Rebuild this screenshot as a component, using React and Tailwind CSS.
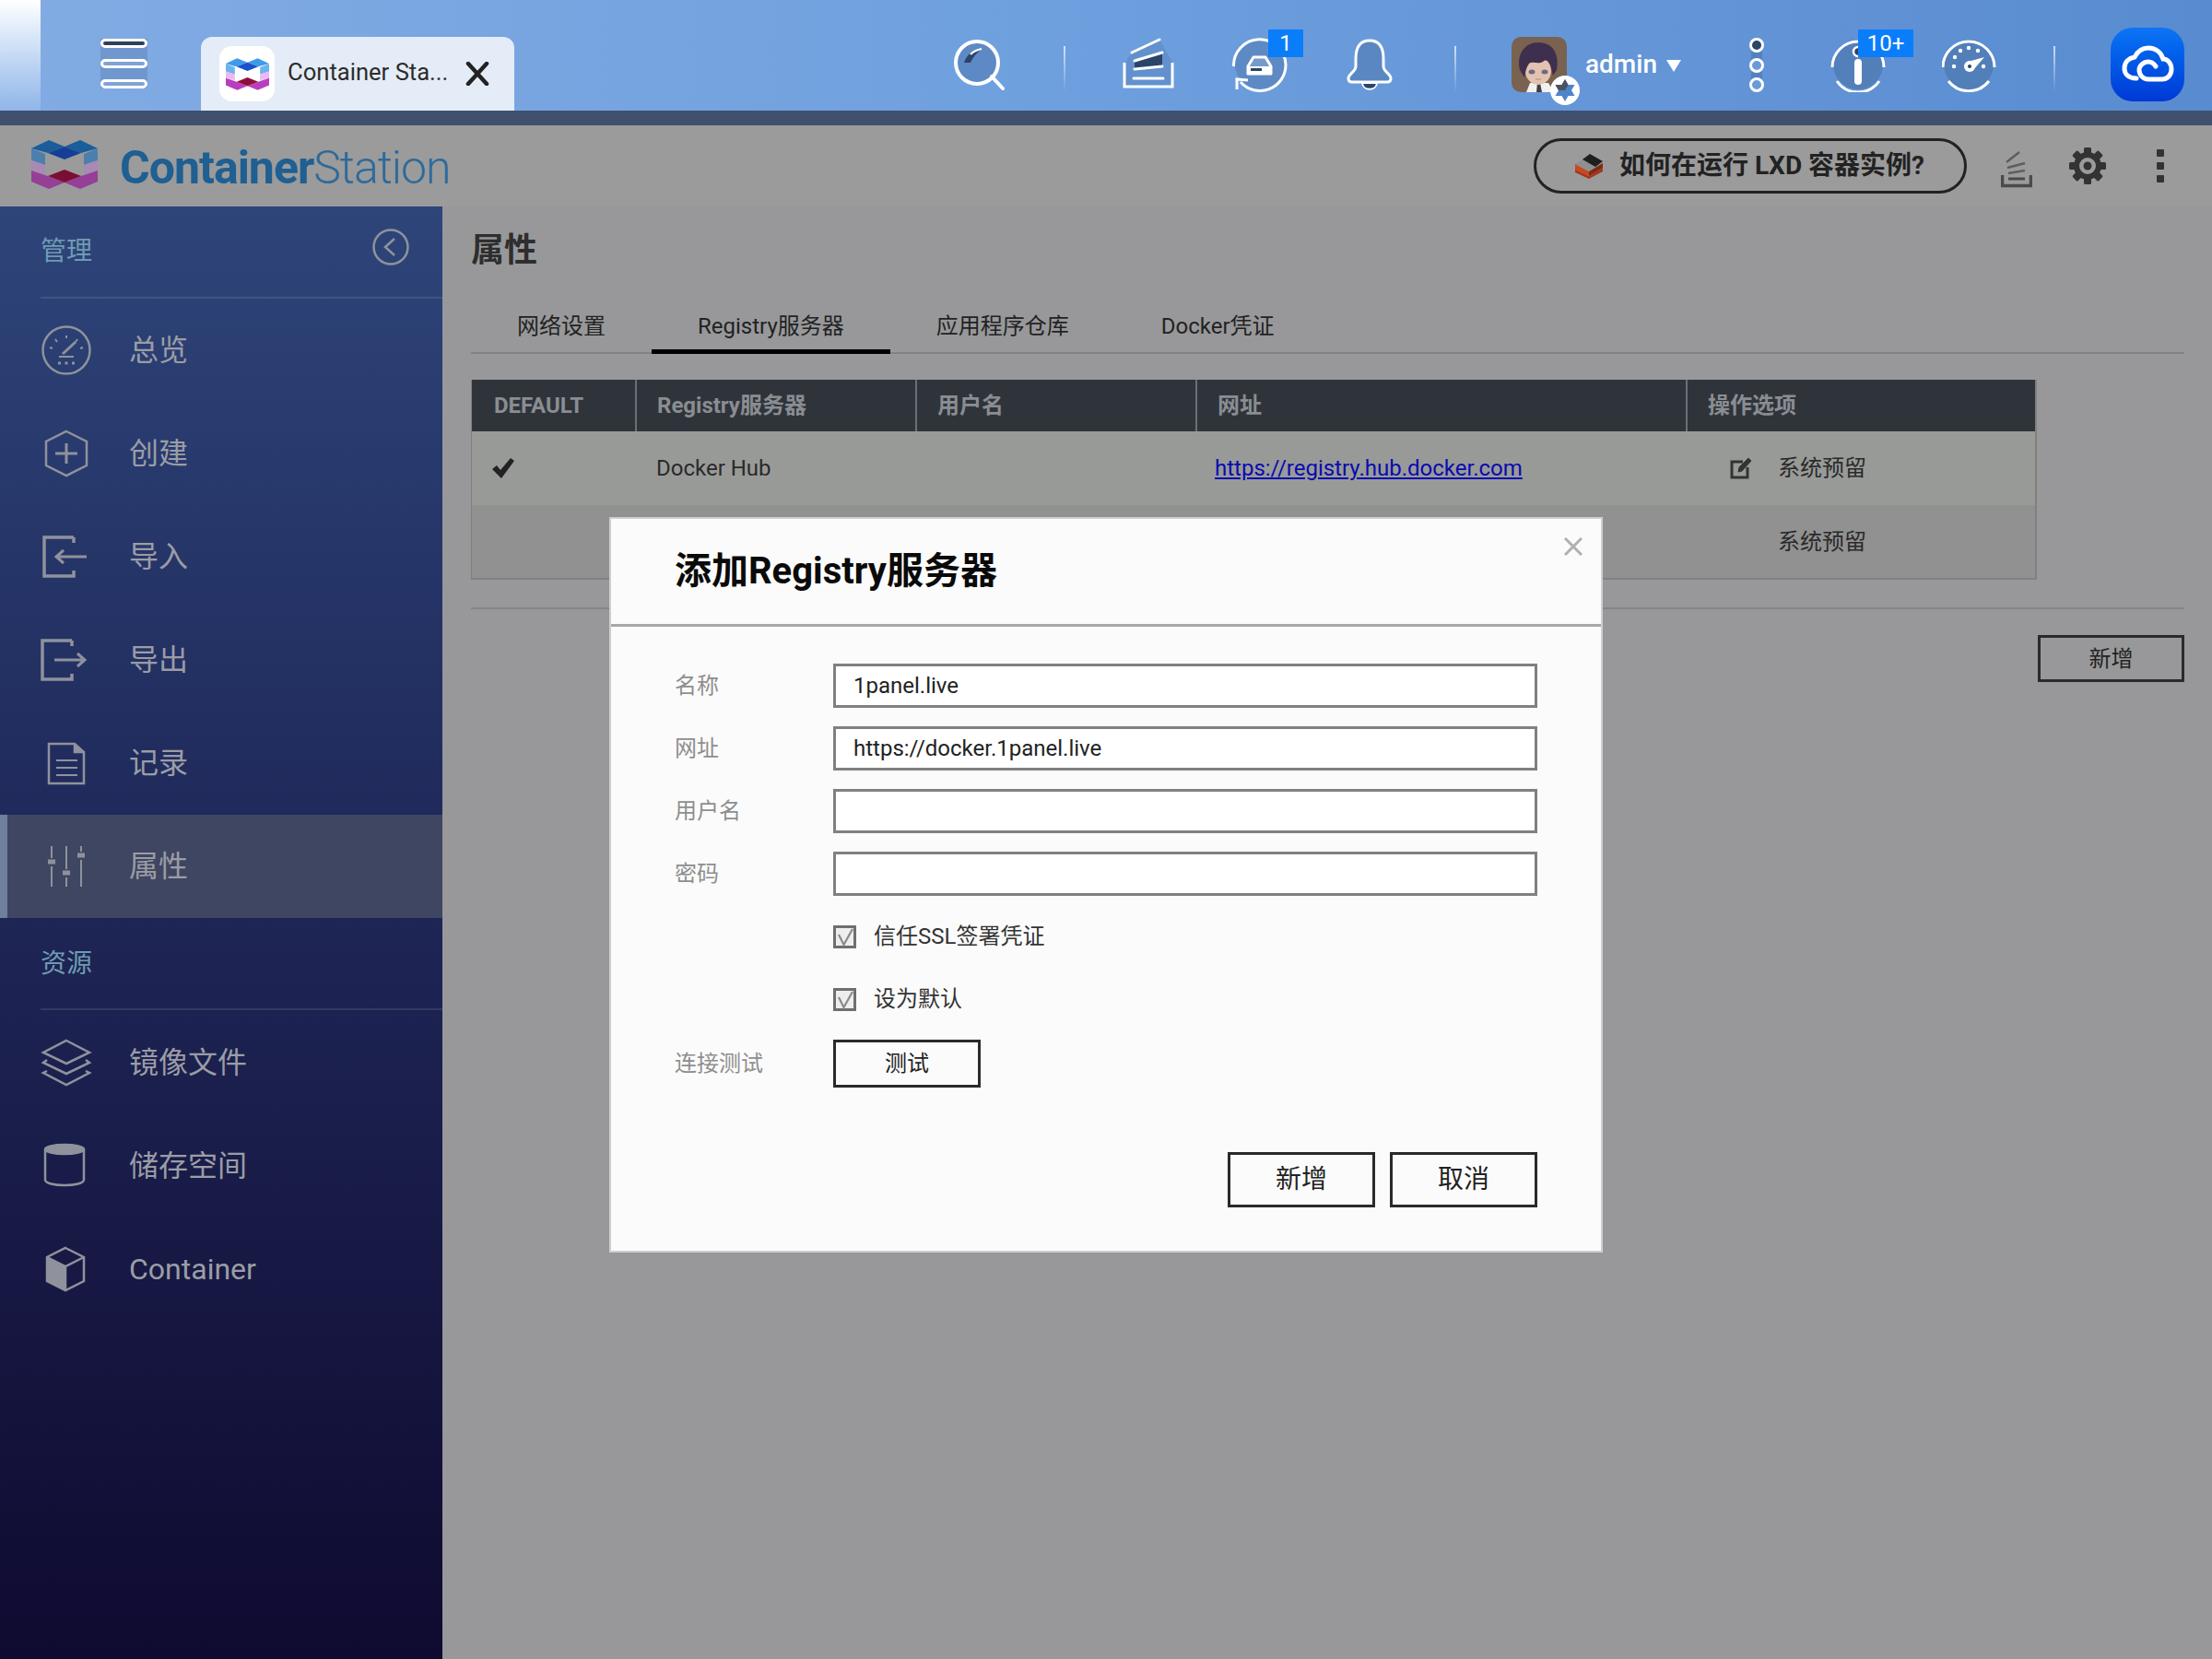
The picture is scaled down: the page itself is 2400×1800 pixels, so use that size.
import React from 'react';

const darkInk = '#2b4468';

function QnapLogo({ width, height, c }) {
  return (
    <svg width={width} height={height} viewBox="0 0 72 53">
      <polygon points="0,9 19,0 36,7 18,14" fill={c.top} />
      <polygon points="72,9 53,0 36,7 54,14" fill={c.top} />
      <polygon points="36,7 18,14 36,21 54,14" fill={c.core} />
      <polygon points="0,9 15,15 15,27 0,22" fill={c.side} />
      <polygon points="72,9 57,15 57,27 72,22" fill={c.side} />
      <polygon points="0,22 15,27 15,37 0,33" fill={c.pink} />
      <polygon points="72,22 57,27 57,37 72,33" fill={c.pink} />
      <polygon points="0,33 15,38 36,46 19,53 0,45" fill={c.purple} />
      <polygon points="72,33 57,38 36,46 53,53 72,45" fill={c.purple} />
      <polygon points="36,32 18,39 36,46 54,39" fill={c.red} />
    </svg>
  );
}

function Separator() {
  return <div className="w-[2px] h-[50px] mt-[50px] bg-linear-to-b from-white/70 to-white/0" />;
}

function SearchIcon() {
  return (
    <svg width="60" height="60" viewBox="0 0 60 60" fill="none">
      <circle cx="27" cy="28" r="23" fill="#4f78ae" fillOpacity="0.55" stroke="#fff" strokeWidth="4" />
      <path d="M43 43 L55 56" stroke="#fff" strokeWidth="4" strokeLinecap="round" />
      <path d="M13 28 C16 19 23 14 32 13 C26 18 22 23 20 28 Z" fill={darkInk} />
      <path d="M20 19 C23 16 27 14 32 13" stroke="#fff" strokeWidth="2" />
    </svg>
  );
}

function StackIcon() {
  return (
    <svg width="60" height="60" viewBox="0 0 60 60" fill="none">
      <polygon points="13,17 43,3 58,29 57,55 5,55 5,29" fill="#4f78ae" fillOpacity="0.35" />
      <polygon points="16,27 46,18 46,32 16,34" fill={darkInk} />
      <path d="M5 28 V54 H57 V28" stroke="#fff" strokeWidth="3" />
      <path d="M15 45 H47 M13 17 L43 3 M16 26 L46 17 M16 35 L46 32" stroke="#fff" strokeWidth="3" strokeLinecap="round" />
    </svg>
  );
}

function SyncIcon() {
  return (
    <svg width="60" height="60" viewBox="0 0 60 60" fill="none">
      <circle cx="30" cy="30" r="27" fill="#4f78ae" fillOpacity="0.5" />
      <path d="M1.5 32 A28 28 0 0 1 58 30 A28 28 0 0 1 9 49" stroke="#fff" strokeWidth="3" />
      <path d="M5 57 V46 L17 47" stroke="#fff" strokeWidth="3" />
      <path d="M17 40 V32 L23 22 H36 L42 32 V40 Z" fill="#fff" fillOpacity="0.15" stroke="#fff" strokeWidth="3" strokeLinejoin="round" />
      <rect x="18" y="32" width="23" height="7" fill="#fff" />
      <rect x="20" y="34" width="12" height="3" fill={darkInk} />
    </svg>
  );
}

function BellIcon() {
  return (
    <svg width="60" height="60" viewBox="0 0 60 60" fill="none">
      <path
        d="M30 4 C18 4 15 14 15 24 V32 C15 38 7 40 7 45 C7 48 9 49 11 49 H49 C51 49 53 48 53 45 C53 40 45 38 45 32 V24 C45 14 42 4 30 4 Z"
        fill="#4f78ae"
        fillOpacity="0.55"
        stroke="#fff"
        strokeWidth="3"
      />
      <path d="M22 50 C23 59 37 59 38 50 Z" fill={darkInk} stroke="#fff" strokeWidth="2" />
    </svg>
  );
}

function Avatar() {
  return (
    <svg width="60" height="60" viewBox="0 0 60 60" className="rounded-[10px]">
      <rect width="60" height="60" fill="#7a6250" />
      <path d="M16 60 L20 50 H40 L46 60 Z" fill="#f1f1ee" />
      <path d="M28 50 L31 50 L33 60 L27 60 Z" fill="#3d4048" />
      <ellipse cx="29" cy="37" rx="14" ry="15" fill="#e3c2b0" />
      <path d="M9 36 C5 18 15 6 29 6 C46 6 52 20 49 36 L45 42 L42 30 C40 26 37 24 34 27 C29 30 23 26 19 29 C16 33 15 38 14 44 Z" fill="#3f2f4e" />
      <ellipse cx="22" cy="38" rx="3.5" ry="2.5" fill="#6a6a88" />
      <ellipse cx="36" cy="38" rx="3.5" ry="2.5" fill="#6a6a88" />
      <path d="M26 46 H32" stroke="#b98a78" strokeWidth="1" />
    </svg>
  );
}

function StarBadge() {
  return (
    <svg width="32" height="32" viewBox="0 0 32 32" className="absolute left-[42px] top-[42px]">
      <circle cx="16" cy="16" r="16" fill="#fff" />
      <polygon points="16,4 19.5,10 26.5,10 23,16 26.5,22 19.5,22 16,28 12.5,22 5.5,22 9,16 5.5,10 12.5,10" fill="#4d85c8" />
      <polygon points="16,4 19.5,10 16,16 9,16 5.5,10 12.5,10" fill="#4b5260" />
    </svg>
  );
}

function DotsIcon() {
  return (
    <svg width="40" height="60" viewBox="0 0 40 60" fill="none">
      <rect x="14" y="9" width="12" height="43" fill={darkInk} fillOpacity="0.22" />
      <circle cx="20" cy="9" r="6.5" fill={darkInk} stroke="#fff" strokeWidth="3" />
      <circle cx="20" cy="31" r="6.5" fill="#6b9ad8" stroke="#fff" strokeWidth="3" />
      <circle cx="20" cy="52" r="6.5" fill="#6b9ad8" stroke="#fff" strokeWidth="3" />
    </svg>
  );
}

function InfoIcon() {
  return (
    <svg width="60" height="60" viewBox="0 0 60 60" fill="none">
      <circle cx="30" cy="30" r="27" fill="#4f78ae" fillOpacity="0.7" />
      <path d="M2 33 A28 28 0 0 1 58 33 M7 48 A28 28 0 0 0 53 48" stroke="#fff" strokeWidth="3" />
      <circle cx="30" cy="16" r="5" fill={darkInk} stroke="#fff" strokeWidth="2.5" />
      <path d="M30 28 V48" stroke="#fff" strokeWidth="8" strokeLinecap="round" />
    </svg>
  );
}

function SpeedIcon() {
  return (
    <svg width="60" height="60" viewBox="0 0 60 60" fill="none">
      <circle cx="29" cy="30" r="27" fill="#4f78ae" fillOpacity="0.7" />
      <path d="M1 33 A28 28 0 0 1 57 33 M7 48 A28 28 0 0 0 51 48" stroke="#fff" strokeWidth="3" />
      {[[13, 32], [14, 22], [20, 15], [29, 12], [39, 15], [45, 32]].map(([x, y]) => (
        <circle key={x + '-' + y} cx={x} cy={y} r="2.2" fill="#fff" />
      ))}
      <circle cx="30" cy="32" r="6" fill="#fff" />
      <polygon points="28,27 46,22 33,37" fill="#fff" />
      <circle cx="30" cy="32" r="2" fill={darkInk} />
    </svg>
  );
}

function CloudApp() {
  return (
    <div className="w-[80px] h-[80px] rounded-[24px] bg-linear-to-b from-[#0f74f5] to-[#0038d6]">
      <svg width="80" height="80" viewBox="0 0 80 80" fill="none">
        <path
          d="M28 55 C18 55 15 49 15 44 C15 37 20 33 26 32 C29 26 34 22 41 22 C49 22 55 27 57 34 C62 34 66 39 66 45 C66 51 62 56 56 56 H41 C35 56 31 51 31 46 C31 41 36 37 41 37 C45 37 47 39 49 42"
          stroke="#fff"
          strokeWidth="5"
          strokeLinecap="round"
        />
      </svg>
    </div>
  );
}

function TopBar() {
  return (
    <div className="flex h-[120px] bg-linear-to-r from-[#82abe3] via-[#6d9fde] to-[#598bd0]">
      <div className="w-[44px] bg-linear-to-b from-white to-[#8fb5e8]" />
      <div className="ml-[65px] mt-[42px] w-[51px] h-[54px] flex flex-col justify-between bg-[#34507f]/20">
        <div className="h-[10px] rounded-full border-[3px] border-white bg-[#2f3f5c]" />
        <div className="h-[10px] rounded-full border-[3px] border-white bg-[#7fa3d6]" />
        <div className="h-[10px] rounded-full border-[3px] border-white bg-[#7fa3d6]" />
      </div>
      <div className="ml-[58px] mt-[40px] w-[340px] h-[80px] rounded-t-[12px] bg-[#e4ecf7] flex items-center pl-[20px]">
        <div className="w-[60px] h-[60px] rounded-[14px] bg-white flex items-center justify-center">
          <QnapLogo width={47} height={35} c={{ top: '#3d9be9', core: '#1a50c8', side: '#6ab4f0', pink: '#ecb8ee', purple: '#b73fbe', red: '#8e0f3a' }} />
        </div>
        <span className="ml-[14px] mt-[-3px] w-[173px] text-[25.6px] text-[#2c2c2c] whitespace-nowrap">Container Sta...</span>
        <svg width="26" height="26" viewBox="0 0 26 26" className="ml-[20px]">
          <path d="M3 2 L23 24 M23 2 L3 24" stroke="#222" strokeWidth="4.5" strokeLinecap="round" />
        </svg>
      </div>
      <div className="ml-[475px] mt-[40px]"><SearchIcon /></div>
      <div className="ml-[61px]"><Separator /></div>
      <div className="ml-[59px] mt-[40px]"><StackIcon /></div>
      <div className="ml-[62px] mt-[40px] relative w-[60px] h-[60px]">
        <SyncIcon />
        <div className="absolute left-[39px] top-[-8px] w-[38px] h-[30px] bg-[#0a7dfb] text-white text-[24px] leading-[30px] text-center">1</div>
      </div>
      <div className="ml-[59px] mt-[40px]"><BellIcon /></div>
      <div className="ml-[62px]"><Separator /></div>
      <div className="ml-[60px] mt-[40px] relative w-[60px] h-[60px]">
        <Avatar />
        <StarBadge />
      </div>
      <div className="ml-[20px] mt-[40px] w-[97px] h-[60px] flex items-center text-white">
        <span className="text-[28px] font-medium">admin</span>
        <svg width="16" height="13" viewBox="0 0 16 13" className="ml-[10px] mt-[2px] shrink-0">
          <polygon points="0,0 16,0 8,13" fill="#fff" />
        </svg>
      </div>
      <div className="ml-[69px] mt-[40px]"><DotsIcon /></div>
      <div className="ml-[60px] mt-[40px] relative w-[60px] h-[60px]">
        <InfoIcon />
        <div className="absolute left-[30px] top-[-8px] w-[60px] h-[30px] bg-[#0a7dfb] text-white text-[24px] leading-[30px] text-center">10+</div>
      </div>
      <div className="ml-[61px] mt-[40px]"><SpeedIcon /></div>
      <div className="ml-[61px]"><Separator /></div>
      <div className="ml-[60px] mt-[30px]"><CloudApp /></div>
    </div>
  );
}

function LxdIcon() {
  return (
    <svg width="30" height="27" viewBox="0 0 30 27">
      <polygon points="0,17 15,24 30,15 30,19 15,27 0,20" fill="#a8361b" />
      <polygon points="0,11 15,19 15,24 0,17" fill="#c8481f" />
      <polygon points="15,19 30,10 30,15 15,24" fill="#7e2a18" />
      <polygon points="0,11 13,3 28,10 15,19" fill="#8f8f8f" />
      <polygon points="8,6 16,0 30,8 22,14" fill="#1f1f1f" />
    </svg>
  );
}

function ToolbarStackIcon() {
  return (
    <svg width="34" height="42" viewBox="0 0 34 42" fill="none" stroke="#4a4a4a">
      <path d="M1.5 27 V38.5 H32.5 V27" strokeWidth="3.5" />
      <path d="M8 31 H26" strokeWidth="3" />
      <path d="M8 25 L26 22 M7 19 L26 14 M6 13 L20 2" strokeWidth="2.6" opacity="0.75" />
    </svg>
  );
}

function GearIcon() {
  const teeth = [0, 45, 90, 135, 180, 225, 270, 315];
  return (
    <svg width="40" height="40" viewBox="0 0 40 40">
      {teeth.map((deg) => (
        <rect key={deg} x="16" y="0" width="8" height="9" rx="1.5" fill="#333" transform={`rotate(${deg} 20 20)`} />
      ))}
      <circle cx="20" cy="20" r="12" fill="none" stroke="#333" strokeWidth="6" />
      <circle cx="20" cy="20" r="4.5" fill="#333" />
    </svg>
  );
}

function AppHeader() {
  return (
    <div className="h-[88px] bg-[#9b9b9b] flex items-center">
      <div className="ml-[34px] mt-[-4px]">
        <QnapLogo width={72} height={53} c={{ top: '#1a5d9a', core: '#153f96', side: '#4d7fad', pink: '#a98ab5', purple: '#953f97', red: '#7a0f35' }} />
      </div>
      <div className="ml-[24px] mt-[3px] w-[360px] text-[50px] leading-none text-[#1f5f92] whitespace-nowrap tracking-[-1px]">
        <span className="font-bold">Container</span>
        <span className="font-light text-[#2e6a9a]">Station</span>
      </div>
      <div className="ml-[1174px] w-[470px] h-[60px] rounded-full border-[3px] border-[#222] flex items-center pl-[42px]">
        <LxdIcon />
        <span className="ml-[18px] text-[28px] font-bold text-[#222] whitespace-nowrap">如何在运行 LXD 容器实例?</span>
      </div>
      <div className="ml-[37px] mt-[8px]"><ToolbarStackIcon /></div>
      <div className="ml-[40px]"><GearIcon /></div>
      <div className="ml-[55px] flex flex-col gap-[6px]">
        <div className="w-[8px] h-[8px] rounded-[1px] bg-[#333]" />
        <div className="w-[8px] h-[8px] rounded-[1px] bg-[#333]" />
        <div className="w-[8px] h-[8px] rounded-[1px] bg-[#333]" />
      </div>
    </div>
  );
}

const sideStroke = { fill: 'none', stroke: '#8f929c', strokeWidth: 2.5 };

const icons = {
  overview: (
    <svg width="60" height="54" viewBox="0 0 60 54" {...sideStroke}>
      <circle cx="30" cy="27" r="25.5" />
      <path d="M12 24 L15 25 M18 15 L20 18 M30 11 V14 M42 15 L40 18 M48 24 L45 25" strokeWidth="2" />
      <path d="M26 31 L40 18" strokeWidth="3" />
      <path d="M22 34 H38" strokeWidth="2" />
      <path d="M21 41 H24 M28.5 41 H31.5 M36 41 H39" strokeWidth="3" />
    </svg>
  ),
  create: (
    <svg width="60" height="54" viewBox="0 0 60 54" {...sideStroke}>
      <path d="M30 3 L52 14 V40 L30 51 L8 40 V14 Z" />
      <path d="M30 16 V38 M18 27 H42" strokeWidth="3" />
    </svg>
  ),
  importing: (
    <svg width="60" height="54" viewBox="0 0 60 54" {...sideStroke} strokeWidth="3.5">
      <path d="M38 6 H6 V48 H38 V42 M38 6 V12" />
      <path d="M52 27 H19 M27 20 L19 27 L27 34" strokeWidth="3" />
    </svg>
  ),
  exporting: (
    <svg width="60" height="54" viewBox="0 0 60 54" {...sideStroke} strokeWidth="3.5">
      <path d="M36 6 H4 V48 H36 V42 M36 6 V12" />
      <path d="M17 27 H50 M42 20 L50 27 L42 34" strokeWidth="3" />
    </svg>
  ),
  log: (
    <svg width="60" height="54" viewBox="0 0 60 54" {...sideStroke}>
      <path d="M11 6 H39 L49 15 V49 H11 Z" />
      <path d="M39 6 V15 H49" fill="#8f929c" />
      <path d="M19 24 H42 M19 32 H42 M19 40 H42" strokeWidth="2" />
    </svg>
  ),
  settings: (
    <svg width="60" height="54" viewBox="0 0 60 54" {...sideStroke}>
      <path d="M14 5 V18 M14 27 V49 M30 5 V30 M30 39 V49 M46 5 V11 M46 20 V49" strokeWidth="2" />
      <path d="M10 22 H18 M26 34 H34 M42 15 H50" strokeWidth="5" />
    </svg>
  ),
  images: (
    <svg width="60" height="54" viewBox="0 0 60 54" {...sideStroke}>
      <path d="M30 3 L55 16 L30 28 L5 16 Z" />
      <path d="M9 24 L5 27 L30 39 L55 27 L51 24" />
      <path d="M9 36 L5 38 L30 51 L55 38 L51 36" />
    </svg>
  ),
  storage: (
    <svg width="60" height="54" viewBox="0 0 60 54" {...sideStroke}>
      <ellipse cx="28" cy="9" rx="21" ry="5" fill="#8f929c" />
      <path d="M7 9 V42 C7 50 49 50 49 42 V9" />
    </svg>
  ),
  container: (
    <svg width="60" height="54" viewBox="0 0 60 54" {...sideStroke}>
      <path d="M29 4 L49 14 V40 L29 50 L9 40 V14 Z" />
      <path d="M9 14 L29 24 L49 14 M29 24 V50" />
      <polygon points="9,14 29,24 29,50 9,40" fill="#8f929c" stroke="none" />
    </svg>
  ),
};

const manageItems = [
  { key: 'overview', label: '总览' },
  { key: 'create', label: '创建' },
  { key: 'importing', label: '导入' },
  { key: 'exporting', label: '导出' },
  { key: 'log', label: '记录' },
  { key: 'settings', label: '属性', active: true },
];

const resourceItems = [
  { key: 'images', label: '镜像文件' },
  { key: 'storage', label: '储存空间' },
  { key: 'container', label: 'Container' },
];

function SideItem({ item }) {
  return (
    <div className={`h-[112px] flex items-center text-[32px] text-[#9b9da5] ${item.active ? 'bg-[#3f4661] border-l-[8px] border-[#6f7f9e] pl-[34px]' : 'pl-[42px]'}`}>
      <div className="w-[99px]">{icons[item.key]}</div>
      <span className="-ml-[1px]">{item.label}</span>
    </div>
  );
}

function Sidebar() {
  return (
    <aside className="w-[480px] shrink-0 bg-linear-to-b from-[#2e457a] via-[#1f2859] via-45% to-[#0f0a30]">
      <div className="ml-[44px] h-[100px] border-b-2 border-white/10 flex items-center justify-between pr-[36px]">
        <span className="text-[28px] text-[#6f9bb2]">管理</span>
        <svg width="40" height="40" viewBox="0 0 40 40" fill="none" stroke="#8f929c" strokeWidth="2.5" className="mt-[-10px]">
          <circle cx="20" cy="20" r="18.5" />
          <path d="M24 11 L14 20 L24 29" />
        </svg>
      </div>
      {manageItems.map((item) => <SideItem key={item.key} item={item} />)}
      <div className="ml-[44px] h-[100px] border-b-2 border-white/10 flex items-center pt-[2px]">
        <span className="text-[28px] text-[#6f9bb2]">资源</span>
      </div>
      <div className="mt-[1px]">
        {resourceItems.map((item) => <SideItem key={item.key} item={item} />)}
      </div>
    </aside>
  );
}

function Tabs() {
  const tabs = ['网络设置', 'Registry服务器', '应用程序仓库', 'Docker凭证'];
  return (
    <div className="flex h-[59px] border-b-2 border-[#828282]">
      {tabs.map((t, i) => (
        <div key={t} className={`px-[50px] h-[59px] flex items-center text-[24px] text-[#222] pt-[4px] ${i === 1 ? 'border-b-[5px] border-black' : 'pb-[5px]'}`}>
          {t}
        </div>
      ))}
    </div>
  );
}

function RegistryTable() {
  const head = ['DEFAULT', 'Registry服务器', '用户名', '网址', '操作选项'];
  const cols = 'grid grid-cols-[177px_304px_304px_532px_1fr]';
  return (
    <div className="mt-[28px] w-[1699px] border-b-2 border-r-2 border-l border-[#808080]">
      <div className={`${cols} h-[56px] bg-[#2f343b] text-[24px] font-bold text-[#8a8d91]`}>
        {head.map((h, i) => (
          <div key={h} className={`flex items-center ${i > 0 ? 'pl-[22px] border-l-2 border-[#6b6f75]' : 'pl-[24px]'}`}>{h}</div>
        ))}
      </div>
      <div className={`${cols} h-[80px] bg-[#989a98] text-[24px] text-[#2a2a2a] items-center`}>
        <div className="pl-[21px]">
          <svg width="26" height="24" viewBox="0 0 26 24">
            <path d="M1 13 L6 9 L10 14 L21 1 L25 4 L11 23 Z" fill="#222" />
          </svg>
        </div>
        <div className="pl-[23px]">Docker Hub</div>
        <div />
        <div className="pl-[21px] text-[#0a0ab0] underline">https://registry.hub.docker.com</div>
        <div className="pl-[48px] flex items-center">
          <svg width="24" height="24" viewBox="0 0 24 24" fill="none" stroke="#333">
            <path d="M14 5 H2 V22 H19 V11" strokeWidth="3" />
            <path d="M9 16 L10 11 L20 1 L23 4 L13 15 Z" fill="#333" strokeWidth="1" />
          </svg>
          <span className="ml-[28px]">系统预留</span>
        </div>
      </div>
      <div className={`${cols} h-[79px] bg-[#919191] text-[24px] text-[#2a2a2a] items-center`}>
        <div />
        <div />
        <div />
        <div />
        <div className="pl-[100px]">系统预留</div>
      </div>
    </div>
  );
}

function Field({ label, value }) {
  return (
    <div className="flex items-center h-[48px]">
      <span className="w-[172px] text-[24px] text-[#8e8e8e]">{label}</span>
      <div className="w-[764px] h-[48px] bg-white border-[3px] border-[#808080] flex items-center pl-[19px] text-[24px] text-[#222]">{value}</div>
    </div>
  );
}

function Check({ label }) {
  return (
    <div className="flex items-center h-[48px] pl-[172px]">
      <svg width="25" height="25" viewBox="0 0 25 25" fill="none">
        <rect x="1.5" y="1.5" width="22" height="22" fill="#eeeeee" stroke="#6f6f6f" strokeWidth="3" />
        <path d="M6 10 L11.5 21 L21 4" stroke="#8a8a8a" strokeWidth="2.2" />
      </svg>
      <span className="ml-[19px] text-[24px] text-[#333]">{label}</span>
    </div>
  );
}

function OutlineButton({ label, className }) {
  return (
    <button className={`bg-[#fbfbfb] border-[3px] border-[#2a2a2a] text-[#222] flex items-center justify-center ${className}`}>
      {label}
    </button>
  );
}

function AddRegistryDialog() {
  return (
    <div className="absolute left-[661px] top-[561px] w-[1078px] h-[798px] bg-[#fbfbfb] border-2 border-[#cfcfcf]">
      <div className="h-[117px] border-b-[3px] border-[#a8a8a8] pl-[69px] flex items-center relative">
        <span className="text-[40px] font-bold text-[#0a0a0a]">添加Registry服务器</span>
        <svg width="20" height="20" viewBox="0 0 20 20" className="absolute right-[20px] top-[20px]">
          <path d="M1 1 L19 19 M19 1 L1 19" stroke="#b0b0b0" strokeWidth="3" />
        </svg>
      </div>
      <div className="pl-[69px] pt-[40px] flex flex-col gap-[20px]">
        <Field label="名称" value="1panel.live" />
        <Field label="网址" value="https://docker.1panel.live" />
        <Field label="用户名" value="" />
        <Field label="密码" value="" />
        <Check label="信任SSL签署凭证" />
        <Check label="设为默认" />
        <div className="flex items-center h-[52px]">
          <span className="w-[172px] text-[24px] text-[#8e8e8e]">连接测试</span>
          <OutlineButton label="测试" className="w-[160px] h-[52px] text-[24px]" />
        </div>
        <div className="flex justify-end gap-[16px] w-[936px] mt-[50px]">
          <OutlineButton label="新增" className="w-[160px] h-[60px] text-[28px]" />
          <OutlineButton label="取消" className="w-[160px] h-[60px] text-[28px]" />
        </div>
      </div>
    </div>
  );
}

export default function App() {
  return (
    <div className="relative w-[2400px] h-[1800px] overflow-hidden font-[Roboto,'Noto_Sans_CJK_SC',sans-serif] bg-[#98989a]">
      <TopBar />
      <div className="h-[16px] bg-[#40506f]" />
      <AppHeader />
      <div className="flex h-[1576px]">
        <Sidebar />
        <main className="flex-1 pl-[31px] pr-[30px]">
          <h1 className="h-[101px] flex items-center text-[36px] font-bold text-[#2e2e2e] pb-[5px]">属性</h1>
          <Tabs />
          <RegistryTable />
          <div className="mt-[30px] h-[2px] bg-[#858585]" />
          <div className="flex justify-end mt-[28px]">
            <OutlineButton label="新增" className="!bg-transparent w-[159px] h-[51px] text-[24px]" />
          </div>
        </main>
      </div>
      <AddRegistryDialog />
    </div>
  );
}
